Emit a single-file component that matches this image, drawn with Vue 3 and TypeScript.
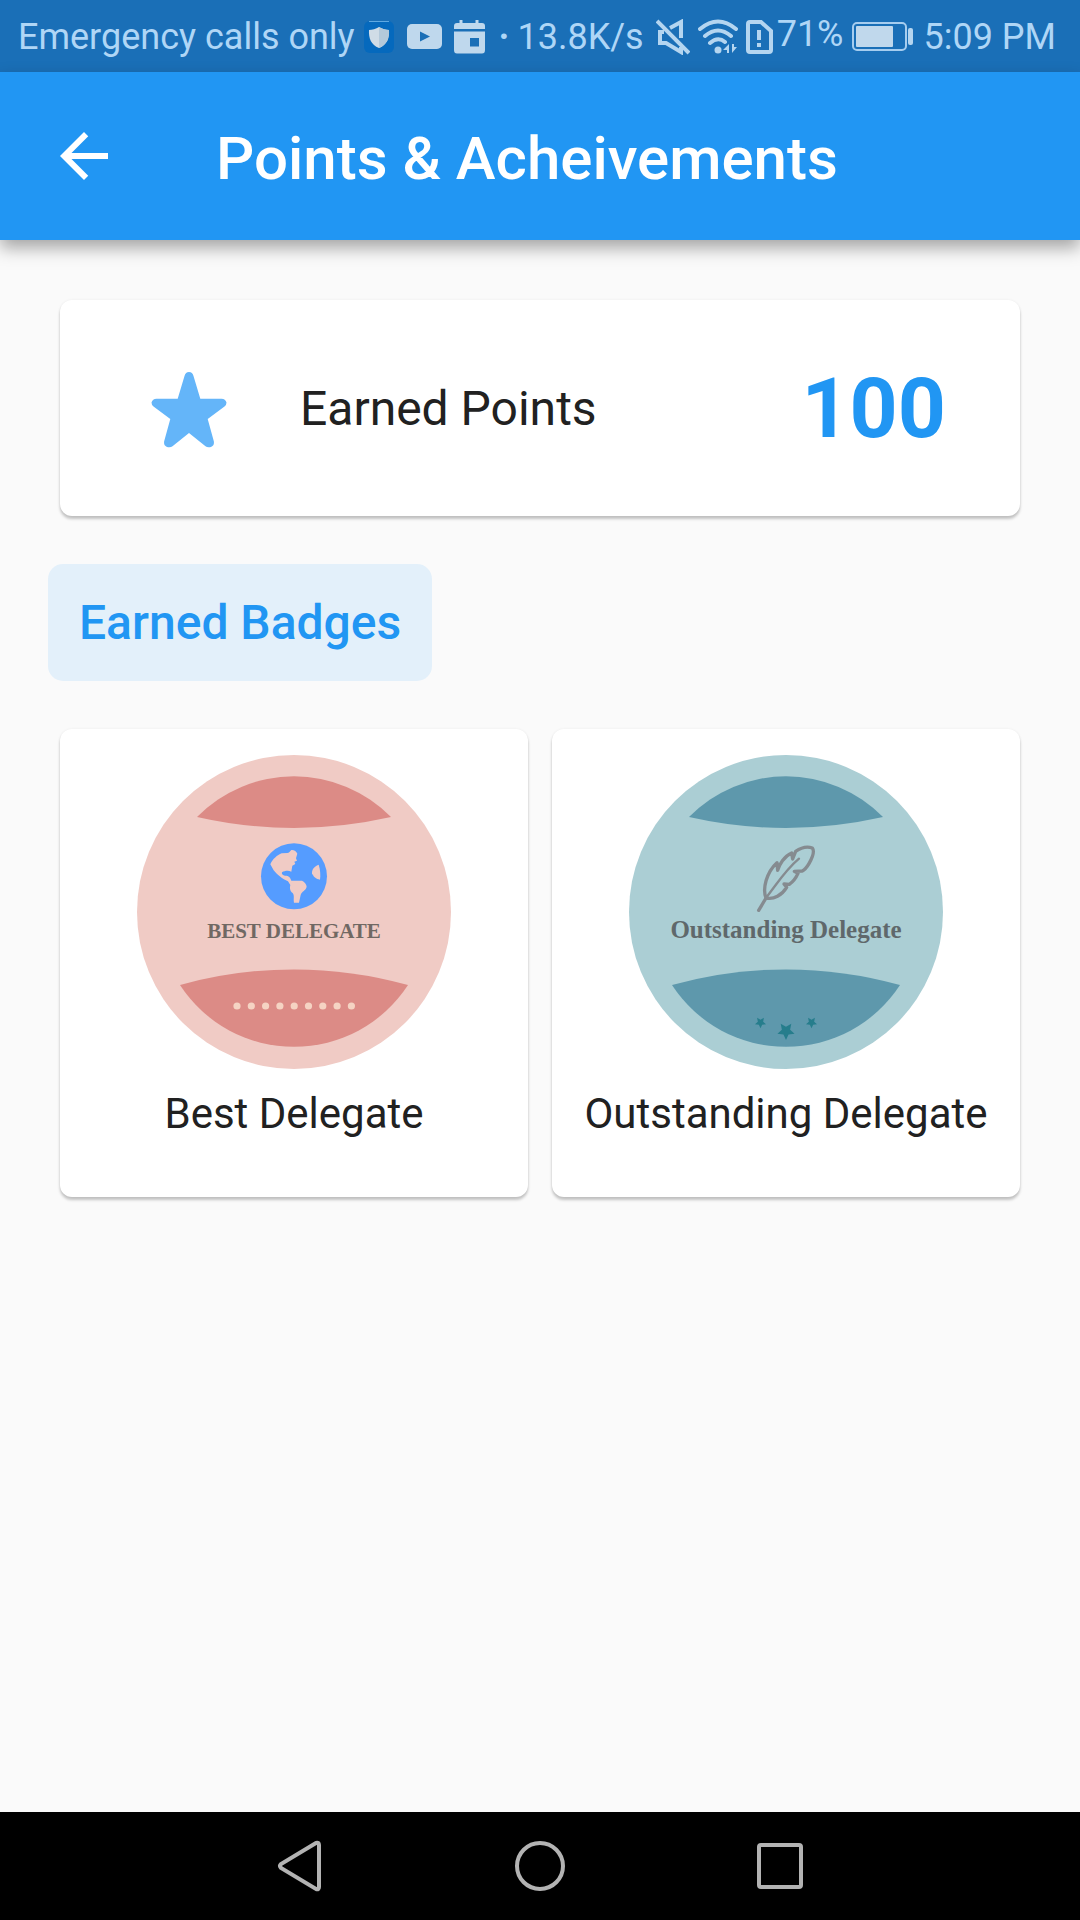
<script setup lang="ts">
interface Badge {
  id: string
  name: string
  caption: string
  kind: 'best' | 'outstanding'
}

const points: number = 100

const badges: Badge[] = [
  { id: 'best', name: 'Best Delegate', caption: 'BEST DELEGATE', kind: 'best' },
  { id: 'outstanding', name: 'Outstanding Delegate', caption: 'Outstanding Delegate', kind: 'outstanding' },
]

const dots: number[] = Array.from({ length: 9 }, (_, i) => 100 + i * 14.3)

// Corner list of a five-pointed star, for a polygon's points attribute.
function star(cx: number, cy: number, r: number, turn: number): string {
  return Array.from({ length: 10 }, (_, i) => {
    const radius = i % 2 === 0 ? r : r * 0.48
    const angle = ((i * 36 + turn - 90) * Math.PI) / 180
    return `${(cx + radius * Math.cos(angle)).toFixed(2)},${(cy + radius * Math.sin(angle)).toFixed(2)}`
  }).join(' ')
}

const stars: string[] = [star(131.5, 267.5, 5.8, 36), star(157, 276, 9, 36), star(182.5, 267.5, 5.8, 36)]
</script>

<template>
  <div class="screen">
    <div class="status">
      <div class="status-group">
        <span class="carrier">Emergency calls only</span>
        <svg width="32" height="34" viewBox="0 0 32 34" aria-hidden="true">
          <rect x="1" y="1" width="30" height="32" rx="6" fill="#0569bd" />
          <path d="M6 1.500H26" stroke="#5fa9e2" stroke-width="1" />
          <path d="M16 7 C19 9 23 10 26 10 C26.500 18 24 25 16 28 C8 25 5.500 18 6 10 C9 10 13 9 16 7Z" fill="#d0dce6" />
          <path d="M16 7 C19 9 23 10 26 10 C26.500 18 24 25 16 28Z" fill="#b4c9da" />
        </svg>
        <svg width="36" height="26" viewBox="0 0 36 26" aria-hidden="true">
          <rect x="1" y="0" width="35" height="25" rx="5" fill="#bfd8ed" />
          <path d="M14 7.500L24 12.500L14 17.500Z" fill="#1a6fb7" />
        </svg>
        <svg width="34" height="36" viewBox="0 0 34 36" aria-hidden="true">
          <path d="M8 1V6M24 1V6" stroke="#bfd8ed" stroke-width="3" />
          <path d="M1 10V7Q1 4 4 4H29Q32 4 32 7V10ZM1 12.500H32V31Q32 34.500 29 34.500H4Q1 34.500 1 31ZM17 19V27.500H26V19Z" fill="#bfd8ed" fill-rule="evenodd" />
        </svg>
      </div>
      <div class="status-group status-right">
        <strong class="more">·</strong>
        <span class="speed">13.8K/s</span>
        <svg width="34" height="36" viewBox="0 0 34 36" fill="none" stroke="#b4d5f0" stroke-width="4" aria-hidden="true">
          <path d="M1 2L33 34" />
          <path d="M8 13H4V24H10L25 33V28M14 9L25 3V19" />
        </svg>
        <svg width="40" height="36" viewBox="0 0 40 36" fill="none" stroke="#b4d5f0" stroke-width="4" stroke-linecap="round" aria-hidden="true">
          <path d="M2 10Q20 -5 38 10M7 17Q20 6 33 17M12 24Q20 17 27 23" />
          <circle cx="20" cy="31" r="3.500" fill="#b4d5f0" stroke="none" />
          <path d="M25 31L31 25V34H29V31H25ZM34 25V34L39 28H36V25Z" fill="#b4d5f0" stroke="none" />
        </svg>
        <svg width="27" height="36" viewBox="0 0 27 36" fill="none" stroke="#b4d5f0" stroke-width="4" aria-hidden="true">
          <path d="M4 3H15L25 12V31Q25 33 23 33H4Q2 33 2 31V5Q2 3 4 3Z" />
          <path d="M13 11V21M13 24V28" />
        </svg>
        <span class="percent">71%</span>
        <svg class="icon-battery" width="62" height="32" viewBox="0 0 62 32" aria-hidden="true">
          <rect x="1" y="2" width="53" height="27" rx="4" fill="none" stroke="#a6cdef" stroke-width="2" />
          <rect x="4" y="5" width="37" height="21" rx="1" fill="#c0d8ec" />
          <rect x="56" y="7" width="5" height="17" rx="2" fill="#b4d5f0" />
        </svg>
        <span>5:09 PM</span>
      </div>
    </div>

    <header class="appbar">
      <button class="back" type="button" aria-label="Back">
        <svg width="72" height="72" viewBox="0 0 24 24" aria-hidden="true">
          <path d="M20 11H7.830l5.590-5.590L12 4l-8 8 8 8 1.410-1.410L7.830 13H20v-2z" fill="#fff" />
        </svg>
      </button>
      <h1>Points &amp; Acheivements</h1>
    </header>

    <main>
      <section class="card points">
        <svg width="80" height="80" viewBox="0 0 80 80" aria-hidden="true">
          <path
            d="M35.500 8Q36.500 4 40 4Q43.500 4 44.500 8L51.300 30.700H72.500Q76.500 30.700 77.500 34.500Q77.500 37 75.500 38.500L58.700 51L64.900 73.500Q65.500 77.500 62 79Q58.500 79.800 56.500 78.300L40 65L23.500 78.300Q21.500 79.800 18 79Q14.500 77.500 15.100 73.500L21.300 51L4.500 38.500Q2.500 37 2.500 34.500Q3.500 30.700 7.500 30.700H28.700Z"
            fill="#64b5f9"
          />
        </svg>
        <span class="points-label">Earned Points</span>
        <strong>{{ points }}</strong>
      </section>

      <h2>Earned Badges</h2>

      <section class="badges">
        <article v-for="badge in badges" :key="badge.id" class="card badge" :class="badge.kind">
          <svg width="314" height="314" viewBox="0 0 314 314" aria-hidden="true">
            <circle class="disc" cx="157" cy="157" r="157" />
            <path class="lens" d="M60 62A136 136 0 0 1 254 62A440 440 0 0 1 60 62Z" />
            <path class="lens" d="M43 230A425 425 0 0 1 271 230A136 136 0 0 1 43 230Z" />

            <template v-if="badge.kind === 'best'">
              <g transform="translate(63 65) scale(0.3333)">
                <circle cx="282" cy="169" r="99" fill="#559cff" />
                <path
                  d="M211 133C218 117 232 105 245 100L262 99C267 99 270 94 274 90C282 89 289 94 292 101L288 115L291 122L283 125L286 132L277 137L274 155C266 151 254 152 246 157C244 165 252 168 263 168C271 172 272 178 274 182H306C313 185 320 193 320 200C318 212 305 213 302 225L297 248H282C280 235 284 227 278 219C269 213 269 202 271 195L264 184C248 177 231 164 221 151Z"
                  fill="#f0cbc5"
                />
                <path d="M356 134C341 140 335 150 336 160C340 170 348 178 360 179C362 166 361 149 356 134Z" fill="#f0cbc5" />
              </g>
              <circle v-for="x in dots" :key="x" :cx="x" cy="251" r="3.600" fill="#f5d3c3" />
            </template>

            <template v-else>
              <g transform="translate(31 65) scale(0.3333)" fill="none" stroke="#858b90" stroke-linecap="round" stroke-linejoin="round">
                <path d="M296 271L320 231" stroke-width="10" />
                <path d="M320 231C350 193 376 150 417 116" stroke-width="7" />
                <path d="M318 234C307 207 319 157 351 128L353 151C358 134 372 109 395 99L398 117L407 94C423 83 443 79 457 84C464 93 459 110 447 131C440 143 433 150 427 153L403 154L414 160C406 178 398 186 388 193L372 192L380 202C366 225 341 240 318 234Z" stroke-width="10" />
              </g>
              <polygon v-for="shape in stars" :key="shape" :points="shape" fill="#267d8c" />
            </template>

            <text class="caption" x="157" y="183" text-anchor="middle">{{ badge.caption }}</text>
          </svg>
          <h3>{{ badge.name }}</h3>
        </article>
      </section>
    </main>

    <nav class="navbar" aria-label="System">
      <button type="button" aria-label="Back">
        <svg width="60" height="60" viewBox="0 0 60 60" aria-hidden="true">
          <path d="M46 7L11 28Q9 30 11 32L46 53Q49 54 49 51V9Q49 6 46 7Z" />
        </svg>
      </button>
      <button type="button" aria-label="Home">
        <svg width="60" height="60" viewBox="0 0 60 60" aria-hidden="true">
          <circle cx="30" cy="30" r="23" />
        </svg>
      </button>
      <button type="button" aria-label="Recent apps">
        <svg width="60" height="60" viewBox="0 0 60 60" aria-hidden="true">
          <rect x="9" y="9" width="42" height="42" rx="2" />
        </svg>
      </button>
    </nav>
  </div>
</template>

<style>
body {
  margin: 0;
  background: #fafafa;
}
</style>

<style scoped>
.screen {
  display: flex;
  flex-direction: column;
  min-height: 100vh;
  background: #fafafa;
  color: #212121;
  font-family: Roboto, "Liberation Sans", sans-serif;
}

.status {
  display: flex;
  justify-content: space-between;
  box-sizing: border-box;
  height: 72px;
  padding: 2px 24px 0 18px;
  background: #1a6fb7;
  color: #afd6f6;
  font-size: 36px;
  line-height: 70px;
  white-space: nowrap;
}

.status-group {
  display: flex;
  align-items: center;
  gap: 11px;
}

.status-right {
  gap: 8px;
}

.carrier {
  margin-right: -3px;
}

.speed {
  margin-right: 4px;
}

.percent {
  align-self: flex-start;
  margin-left: -4px;
  line-height: 64px;
}

.icon-battery {
  margin-right: 2px;
}

.appbar {
  display: flex;
  align-items: center;
  gap: 96px;
  height: 168px;
  padding: 0 48px;
  background: #2196f3;
  box-shadow: 0 8px 16px rgba(0, 0, 0, 0.34);
  color: #fff;
}

button {
  display: flex;
  padding: 0;
  border: 0;
  background: none;
}

h1,
h2,
h3 {
  margin: 0;
  font-weight: 500;
}

h1 {
  padding-top: 6px;
  font-size: 60px;
  line-height: 72px;
}

main {
  flex: 1;
  padding: 60px;
}

.card {
  border-radius: 12px;
  background: #fff;
  box-shadow: 0 3px 3px rgba(0, 0, 0, 0.22), 0 0 3px rgba(0, 0, 0, 0.06);
}

.points {
  display: flex;
  align-items: center;
  height: 216px;
  padding: 0 74px 0 89px;
}

.points-label {
  margin-left: 71px;
  font-size: 48px;
}

.points strong {
  margin-left: auto;
  color: #2196f3;
  font-size: 84px;
  font-weight: 700;
}

h2 {
  width: fit-content;
  margin: 48px 0 48px -12px;
  padding: 0 31px;
  border-radius: 15px;
  background: #e3f0fa;
  color: #2196f3;
  font-size: 48px;
  line-height: 117px;
}

.badges {
  display: grid;
  grid-template-columns: 1fr 1fr;
  gap: 24px;
}

.badge {
  display: flex;
  flex-direction: column;
  align-items: center;
  gap: 21px;
  box-sizing: border-box;
  aspect-ratio: 1;
  padding-top: 26px;
}

h3 {
  font-size: 42px;
  font-weight: 400;
  line-height: 48px;
}

.caption {
  font-family: "Liberation Serif", serif;
  font-weight: 700;
}

.best .disc {
  fill: #f0cbc5;
}

.best .lens {
  fill: #dc8b86;
}

.best .caption {
  fill: #706863;
  font-size: 21px;
}

.outstanding .disc {
  fill: #abced4;
}

.outstanding .lens {
  fill: #5e98ac;
}

.outstanding .caption {
  fill: #5f686b;
  font-size: 25px;
}

.navbar {
  display: flex;
  align-items: center;
  justify-content: center;
  gap: 180px;
  height: 108px;
  background: #000;
}

.navbar svg {
  fill: none;
  stroke: #b3b3b3;
  stroke-width: 4;
}
</style>
